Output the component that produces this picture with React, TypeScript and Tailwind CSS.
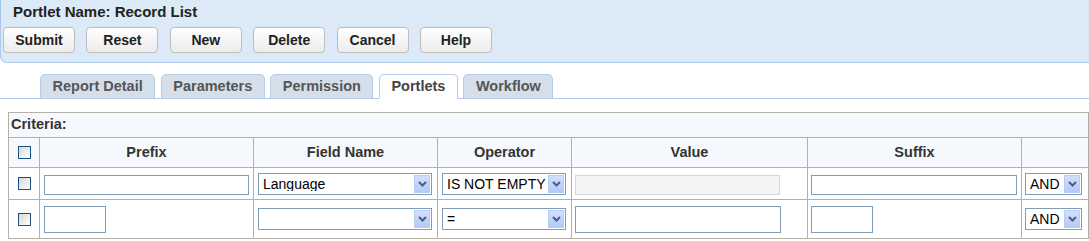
import React from "react";

const buttons = ["Submit", "Reset", "New", "Delete", "Cancel", "Help"];
const tabs = ["Report Detail", "Parameters", "Permission", "Portlets", "Workflow"];

// little blue dropdown arrow box, old-school style
function Arrow() {
  return (
    <span className="flex h-[18px] w-[16px] shrink-0 items-center justify-center border border-[#b9cbf1] bg-gradient-to-b from-[#d3e0fc] to-[#b2c9f7]">
      <svg width="9" height="6" viewBox="0 0 9 6">
        <path d="M1 1 L4.5 4.5 L8 1" fill="none" stroke="#4b5e86" strokeWidth="2" />
      </svg>
    </span>
  );
}

function Select({ value, w }: { value: string; w: string }) {
  return (
    <div className={`flex h-[22px] items-center border border-[#7f9db9] bg-white p-px ${w}`}>
      <span className="flex-1 overflow-hidden whitespace-nowrap pl-[3px] text-[14px] leading-none text-black">
        {value}
      </span>
      <Arrow />
    </div>
  );
}

function Check() {
  return (
    <div className="mx-auto h-[13px] w-[13px] border border-[#1c5180] bg-gradient-to-br from-[#d8d8d4] to-white" />
  );
}

const td = "border border-[#b3b0a8] align-middle";

export default function App() {
  return (
    <div className="min-h-screen bg-white font-['Liberation_Sans',Arial,sans-serif]">
      {/* Header panel */}
      <div className="h-[63px] rounded-bl-[7px] border-b border-l border-[#a9c8eb] bg-[#dce9f6] pt-[3px]">
        <div className="pl-[12px] text-[15px] font-bold leading-[18px] text-[#222]">Portlet Name: Record List</div>
        <div className="ml-[2px] mt-[6px] flex gap-[11.4px]">
          {buttons.map((b) => (
            <button
              key={b}
              className="h-[26px] w-[72px] rounded-[4px] border border-[#bdbdbd] bg-gradient-to-b from-white to-[#ececec] text-[14px] font-bold text-[#222]"
            >
              {b}
            </button>
          ))}
        </div>
      </div>

      {/* Tabs */}
      <div className="mt-[11px] flex gap-[5.5px] border-b border-[#a9c8eb] pl-[40px]">
        {tabs.map((t) => {
          const active = t === "Portlets";
          return (
            <div
              key={t}
              className={`-mb-px flex h-[25px] items-center rounded-t-[5px] border border-[#b5cde6] px-[11.5px] pt-px text-[14.5px] font-bold ${
                active ? "border-b-white bg-white text-[#444]" : "bg-[#d5dfea] text-[#555]"
              }`}
            >
              {t}
            </div>
          );
        })}
      </div>

      {/* Criteria table */}
      <table className="ml-[8px] mt-[13px] w-[1080px] table-fixed border-collapse border border-[#b3b0a8]">
        <colgroup>
          <col className="w-[31px]" />
          <col className="w-[214px]" />
          <col className="w-[184px]" />
          <col className="w-[134px]" />
          <col className="w-[236px]" />
          <col className="w-[214px]" />
          <col className="w-[67px]" />
        </colgroup>
        <tbody>
          <tr className="h-[25px] bg-[#f5f9fd]">
            <td colSpan={7} className={`${td} px-[2px] text-[14.5px] font-bold text-[#333]`}>
              Criteria:
            </td>
          </tr>
          <tr className="h-[30px] bg-[#f5f9fd] text-[14.5px] font-bold text-[#333]">
            <td className={td}>
              <Check />
            </td>
            <td className={`${td} text-center`}>Prefix</td>
            <td className={`${td} text-center`}>Field Name</td>
            <td className={`${td} text-center`}>Operator</td>
            <td className={`${td} text-center`}>Value</td>
            <td className={`${td} text-center`}>Suffix</td>
            <td className={td}></td>
          </tr>
          <tr className="h-[32px]">
            <td className={td}>
              <Check />
            </td>
            <td className={`${td} pl-[4px] pt-[2px]`}>
              <input className="block h-[20px] w-[205px] border border-[#7f9db9] bg-white" />
            </td>
            <td className={`${td} pl-[4px]`}>
              <Select value="Language" w="w-[174px]" />
            </td>
            <td className={`${td} pl-[4px]`}>
              <Select value="IS NOT EMPTY" w="w-[124px]" />
            </td>
            <td className={`${td} pl-[3px] pt-[2px]`}>
              <input disabled className="block h-[20px] w-[205px] border border-[#d6d6d6] bg-[#f4f4f4]" />
            </td>
            <td className={`${td} pl-[3px] pt-[2px]`}>
              <input className="block h-[20px] w-[206px] border border-[#7f9db9] bg-white" />
            </td>
            <td className={`${td} pl-[3px]`}>
              <Select value="AND" w="w-[57px]" />
            </td>
          </tr>
          <tr className="h-[39px]">
            <td className={td}>
              <Check />
            </td>
            <td className={`${td} pl-[4px]`}>
              <input className="block h-[27px] w-[62px] border border-[#7f9db9] bg-white" />
            </td>
            <td className={`${td} pl-[4px]`}>
              <Select value="" w="w-[174px]" />
            </td>
            <td className={`${td} pl-[4px]`}>
              <Select value="=" w="w-[124px]" />
            </td>
            <td className={`${td} pl-[3px]`}>
              <input className="block h-[27px] w-[206px] border border-[#7f9db9] bg-white" />
            </td>
            <td className={`${td} pl-[3px]`}>
              <input className="block h-[27px] w-[62px] border border-[#7f9db9] bg-white" />
            </td>
            <td className={`${td} pl-[3px]`}>
              <Select value="AND" w="w-[57px]" />
            </td>
          </tr>
        </tbody>
      </table>
    </div>
  );
}
